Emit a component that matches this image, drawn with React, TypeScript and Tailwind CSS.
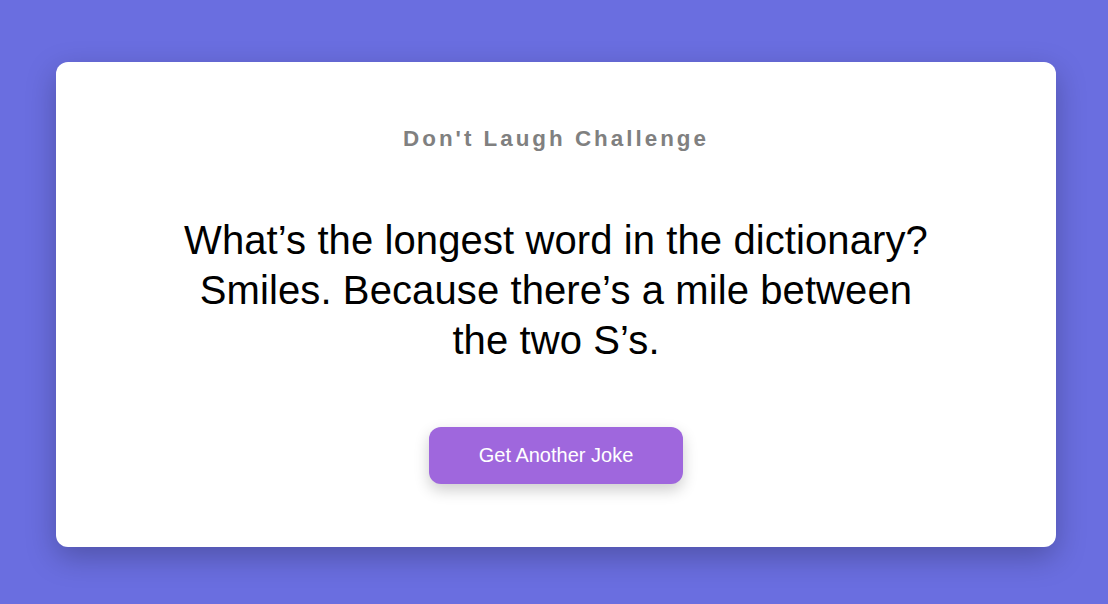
import React from "react";

export default function App() {
  return (
    <div
      className="w-[1108px] h-[604px] bg-[#6a6ee0] pl-[56px] pt-[62px] overflow-hidden"
      style={{ fontFamily: '"Liberation Sans", Arial, sans-serif' }}
    >
      <div className="w-[1000px] h-[485px] bg-white rounded-[12px] shadow-[0_10px_30px_rgba(0,0,0,0.25)] flex flex-col items-center pt-[64px]">
        <h1 className="text-[22.4px] leading-[25.7px] font-bold tracking-[3px] text-[#808080] m-0">
          Don't Laugh Challenge
        </h1>
        <p className="mt-[63px] w-[760px] text-center text-[40px] leading-[50px] tracking-[0.1px] text-black">
          What’s the longest word in the dictionary? Smiles. Because there’s a mile between the two S’s.
        </p>
        <button className="mt-[62px] w-[254px] h-[57px] rounded-[12px] bg-[#9f67dd] text-white text-[20px] leading-[23px] shadow-[0_6px_15px_rgba(0,0,0,0.2)]">
          Get Another Joke
        </button>
      </div>
    </div>
  );
}
